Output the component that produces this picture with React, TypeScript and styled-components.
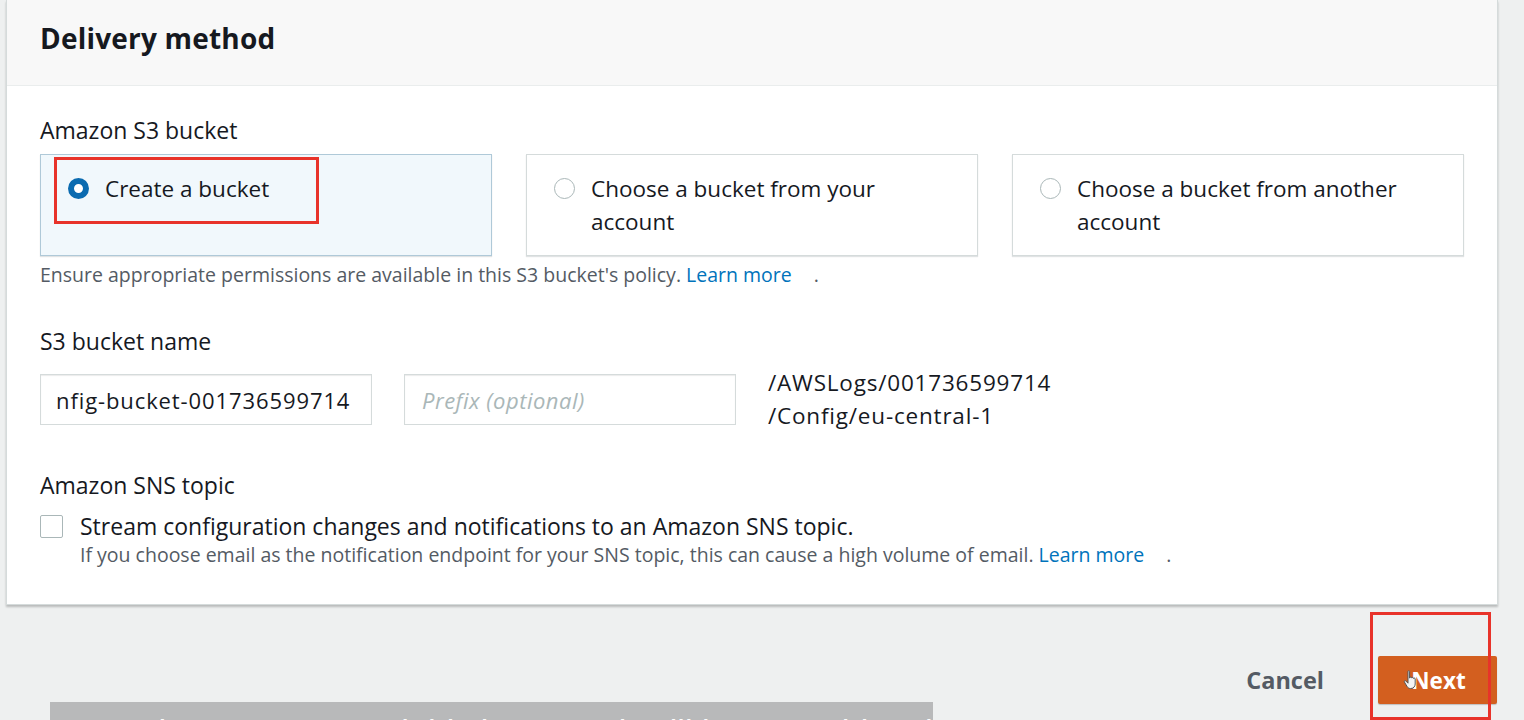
import React from "react";
import styled, { createGlobalStyle } from "styled-components";

const Global = createGlobalStyle`
  html, body { margin: 0; padding: 0; }
  body {
    background: #eef0f0;
    font-family: "Open Sans", "Liberation Sans", sans-serif;
    color: #16191f;
    overflow: hidden;
  }
`;

const Page = styled.div`
  position: relative;
  width: 1524px;
  height: 720px;
  overflow: hidden;
`;

const Card = styled.section`
  margin-left: 6px;
  width: 1492px;
  box-sizing: border-box;
  background: #fff;
  border: 1px solid #d5dbdb;
  border-top: none;
  box-shadow: 0 2px 2px rgba(0, 0, 0, 0.22);
`;

const CardHeader = styled.header`
  height: 86px;
  box-sizing: border-box;
  background: #f8f8f8;
  border-bottom: 1px solid #eaeded;
  padding: 18px 0 0 33px;
`;

const Title = styled.h2`
  margin: 0;
  font-size: 28px;
  line-height: 40px;
  font-weight: 700;
  letter-spacing: 0.2px;
  color: #16191f;
`;

const CardBody = styled.div`
  padding: 30px 33px 37px 33px;
  display: flex;
  flex-direction: column;
`;

const Label = styled.div<{ $gap?: number }>`
  font-size: 23px;
  line-height: 28px;
  color: #16191f;
  margin-top: ${(p) => p.$gap ?? 0}px;
`;

const TileGrid = styled.div`
  display: grid;
  grid-template-columns: repeat(3, 1fr);
  column-gap: 34px;
  margin-top: 10px;
`;

const Tile = styled.div<{ $selected?: boolean }>`
  height: 102px;
  box-sizing: border-box;
  display: flex;
  align-items: flex-start;
  gap: 16px;
  padding: 17px 20px 0 27px;
  background: ${(p) => (p.$selected ? "#f1f8fc" : "#fff")};
  border: 1px solid ${(p) => (p.$selected ? "#afc9d8" : "#d5dbdb")};
  box-shadow: 0 1px 1px rgba(0, 28, 36, 0.12);
`;

const Radio = styled.span<{ $checked?: boolean }>`
  flex: none;
  width: 21px;
  height: 21px;
  box-sizing: border-box;
  margin-top: 6px;
  border-radius: 50%;
  background: #fff;
  border: ${(p) => (p.$checked ? "6px solid #0b6bb0" : "1.5px solid #aab7b8")};
`;

const TileText = styled.span`
  font-size: 22.5px;
  line-height: 33px;
  color: #16191f;
`;

const Help = styled.div<{ $gap?: number }>`
  font-size: 19.5px;
  line-height: 24px;
  color: #545b64;
  margin-top: ${(p) => p.$gap ?? 0}px;
`;

const Link = styled.a`
  color: #0073bb;
  text-decoration: none;
  margin-right: 22px;
`;

const InputRow = styled.div`
  display: flex;
  align-items: flex-start;
  margin-top: 19px;
`;

const TextInput = styled.div<{ $placeholder?: boolean }>`
  width: 332px;
  height: 51px;
  box-sizing: border-box;
  border: 1px solid #d5dbdb;
  box-shadow: inset 0 1px 1px rgba(0, 0, 0, 0.08);
  background: #fff;
  display: flex;
  align-items: center;
  padding-left: ${(p) => (p.$placeholder ? 17 : 15)}px;
  font-size: 22px;
  font-style: ${(p) => (p.$placeholder ? "italic" : "normal")};
  letter-spacing: ${(p) => (p.$placeholder ? 0.5 : 0.9)}px;
  color: ${(p) => (p.$placeholder ? "#aab7b8" : "#16191f")};
  white-space: nowrap;
  overflow: hidden;
  margin-right: 32px;
`;

const PathText = styled.div`
  font-size: 22.5px;
  line-height: 33px;
  margin-top: -8px;
  color: #16191f;
  letter-spacing: 0.8px;
`;

const CheckRow = styled.div`
  display: flex;
  align-items: flex-start;
  gap: 17px;
  margin-top: 12px;
`;

const Checkbox = styled.span`
  flex: none;
  width: 23px;
  height: 23px;
  box-sizing: border-box;
  margin-top: 4px;
  border: 1.5px solid #aab7b8;
  border-radius: 2px;
  background: #fff;
`;

const CheckText = styled.div`
  display: flex;
  flex-direction: column;
`;

const CheckLabel = styled.span`
  font-size: 23px;
  line-height: 30px;
  color: #16191f;
  margin-bottom: 2px;
`;

const Footer = styled.div`
  display: flex;
  justify-content: flex-end;
  align-items: center;
  gap: 54px;
  margin-top: 51px;
  width: 1497px;
`;

const CancelButton = styled.button`
  border: none;
  background: transparent;
  padding: 0;
  font-family: inherit;
  font-size: 23.5px;
  font-weight: 700;
  color: #545b64;
`;

const NextButton = styled.button`
  position: relative;
  width: 119px;
  height: 48px;
  border: none;
  border-radius: 2px;
  background: #d35f1f;
  color: #fff;
  font-family: inherit;
  font-size: 22.5px;
  font-weight: 700;
  padding-left: 8px;
  box-shadow: 0 1px 1px rgba(0, 0, 0, 0.2);
`;

const Cursor = styled.svg`
  position: absolute;
  left: 24px;
  top: 13px;
`;

const Highlight = styled.div<{ $x: number; $y: number; $w: number; $h: number }>`
  position: absolute;
  left: ${(p) => p.$x}px;
  top: ${(p) => p.$y}px;
  width: ${(p) => p.$w}px;
  height: ${(p) => p.$h}px;
  box-sizing: border-box;
  border: 3px solid #e8332a;
  pointer-events: none;
`;

const Caption = styled.div`
  position: absolute;
  left: 50px;
  top: 702px;
  width: 883px;
  height: 40px;
  background: #b8b9ba;
  color: #fff;
  font-family: "Liberation Sans", Arial, sans-serif;
  font-size: 34px;
  line-height: 40px;
  padding: 9px 0 0 18px;
  box-sizing: border-box;
  white-space: nowrap;
  overflow: hidden;
`;

export default function App() {
  return (
    <Page>
      <Global />
      <Card>
        <CardHeader>
          <Title>Delivery method</Title>
        </CardHeader>
        <CardBody>
          <Label>Amazon S3 bucket</Label>
          <TileGrid>
            <Tile $selected>
              <Radio $checked />
              <TileText>Create a bucket</TileText>
            </Tile>
            <Tile>
              <Radio />
              <TileText>
                Choose a bucket from your
                <br />
                account
              </TileText>
            </Tile>
            <Tile>
              <Radio />
              <TileText>
                Choose a bucket from another
                <br />
                account
              </TileText>
            </Tile>
          </TileGrid>
          <Help $gap={7}>
            Ensure appropriate permissions are available in this S3 bucket's policy.{" "}
            <Link>Learn more</Link>.
          </Help>

          <Label $gap={40}>S3 bucket name</Label>
          <InputRow>
            <TextInput>nfig-bucket-001736599714</TextInput>
            <TextInput $placeholder>Prefix (optional)</TextInput>
            <PathText>
              /AWSLogs/001736599714
              <br />
              /Config/eu-central-1
            </PathText>
          </InputRow>

          <Label $gap={39}>Amazon SNS topic</Label>
          <CheckRow>
            <Checkbox />
            <CheckText>
              <CheckLabel>
                Stream configuration changes and notifications to an Amazon SNS topic.
              </CheckLabel>
              <Help>
                If you choose email as the notification endpoint for your SNS topic, this can
                cause a high volume of email. <Link>Learn more</Link>.
              </Help>
            </CheckText>
          </CheckRow>
        </CardBody>
      </Card>

      <Footer>
        <CancelButton>Cancel</CancelButton>
        <NextButton>
          Next
          <Cursor width="18" height="22" viewBox="0 0 18 22">
            <path
              d="M6 2.5c0-1 1.6-1 1.6 0V9l0.4-0.2c0-1 1.6-1 1.6 0l0.2 0.3c0.2-0.9 1.6-0.9 1.6 0.1l0.2 0.4c0.3-0.8 1.6-0.7 1.6 0.3V15c0 2.5-1.8 4.5-4.4 4.5H8.3c-1.4 0-2.4-0.8-3.2-2L2.4 13c-0.6-1 0.8-1.9 1.5-1L6 14.2z"
              fill="#f4f4f4"
              stroke="#555"
              strokeWidth="1"
            />
          </Cursor>
        </NextButton>
      </Footer>

      <Highlight $x={54} $y={157} $w={265} $h={67} />
      <Highlight $x={1370} $y={612} $w={121} $h={108} />
      <Caption>But I don't recommend this because it will be something that we delete</Caption>
    </Page>
  );
}
